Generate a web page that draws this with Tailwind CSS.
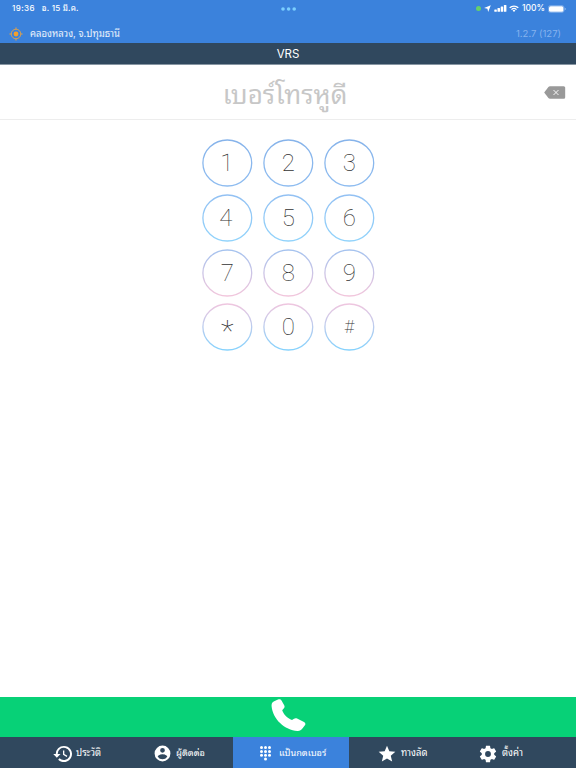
<!DOCTYPE html>
<html lang="th">
<head>
  <meta charset="UTF-8" />
  <meta name="viewport" content="width=device-width, initial-scale=1.0"/>
  <title>VRS</title>
  <script src="https://cdn.jsdelivr.net/npm/@tailwindcss/browser@4"></script>
</head>
<body class="h-screen flex flex-col overflow-hidden bg-white font-[Inter,'Noto_Sans_Thai_Looped',Loma,Garuda,Waree,sans-serif]">

  <!-- Status bar + location -->
  <header class="h-[43px] shrink-0 bg-[#3b82dc] text-white">
    <div class="h-[17px] flex items-center justify-between pl-3 pr-[10px] text-[8px] font-medium leading-none whitespace-nowrap">
      <div class="w-[200px] flex gap-[7px] -mt-[1px]">
        <span class="tracking-[0.4px]">19:36</span>
        <span class="tracking-[0.2px]">อ. 15 มี.ค.</span>
      </div>
      <svg class="w-[16px] h-[4px] fill-[#7bcfff]" viewBox="0 0 16 4"><circle cx="2" cy="2" r="1.8"/><circle cx="7.6" cy="2" r="1.8"/><circle cx="13.2" cy="2" r="1.8"/></svg>
      <div class="w-[200px] flex items-center justify-end">
        <span class="w-[5px] h-[5px] rounded-full bg-[#66d06a] mr-[3px]"></span>
        <svg class="w-[7px] h-[7px] mr-[3px] fill-white" viewBox="0 0 7 7"><path d="M6.8.2 4.2 6.9 3.4 3.7.1 3z"/></svg>
        <svg class="w-[13px] h-[7px] mr-[2px] fill-white" viewBox="0 0 13 7"><rect x=".3" y="4.4" width="2.5" height="2.4" rx=".5"/><rect x="3.5" y="3.1" width="2.5" height="3.7" rx=".5"/><rect x="6.7" y="1.6" width="2.5" height="5.2" rx=".5"/><rect x="9.9" y=".1" width="2.5" height="6.7" rx=".5"/></svg>
        <svg class="w-[10px] h-[7px] mr-[3px] fill-none stroke-white" viewBox="0 0 10 7" stroke-width="1.3"><path d="M.7 2.8a6.2 6.2 0 0 1 8.6 0M2.5 4.6a3.6 3.6 0 0 1 5 0"/><path d="M5 7 3.6 5.5a2 2 0 0 1 2.8 0z" fill="#fff" stroke="none"/></svg>
        <span class="text-[8.5px] mr-[3px]">100%</span>
        <svg class="w-[18px] h-[8px]" viewBox="0 0 18 8"><rect x=".4" y=".6" width="15.6" height="6.8" rx="2" fill="none" stroke="#8fb9ee" stroke-width=".7"/><rect x="1" y="1.2" width="14.4" height="5.6" rx="1.5" fill="#fff"/><path d="M16.8 2.8v2.4q.9-.4.9-1.2t-.9-1.2z" fill="#a9c9f2"/></svg>
      </div>
    </div>
    <div class="h-[26px] pt-[7px] pl-[9px] pr-[15px] flex items-start justify-between leading-[19px]">
      <div class="flex">
        <svg class="w-[14px] h-[14px] mt-[3px] mr-[7px]" viewBox="0 0 14 14"><circle cx="7" cy="7" r="4.8" fill="none" stroke="#d9a050" stroke-width="1"/><circle cx="7" cy="7" r="2.4" fill="#f3a02c"/><path d="M7 .4v2.2M7 11.4v2.2M.4 7h2.2M11.4 7h2.2" stroke="#d9a050"/></svg>
        <span class="text-[9.5px] text-white/90">คลองหลวง, จ.ปทุมธานี</span>
      </div>
      <span class="text-[9.5px] text-[#86b3ee]">1.2.7 (127)</span>
    </div>
  </header>

  <div class="h-[22px] shrink-0 bg-[#30485e] border-b border-[#8796a3] text-white text-[11.5px] leading-[22px] text-center">VRS</div>

  <!-- Number display -->
  <div class="h-[55px] shrink-0 flex border-b border-[#ededed] pr-[10px]">
    <div class="w-[544px] pl-[26px] pt-[10px] text-center text-[26px] leading-[40px] text-[#c7c7c7] whitespace-nowrap">เบอร์โทรหูดี</div>
    <svg class="w-[22px] h-[13px] mt-[21px] shrink-0" viewBox="0 0 22 13"><path d="M.2 6.5 4.4 1Q5 .3 6 .3h13.7q1.5 0 1.5 1.5v9.4q0 1.5-1.5 1.5H6q-1 0-1.6-.7z" fill="#999"/><path d="m9.5 4 5 5m0-5-5 5" stroke="#fff" stroke-width=".9"/></svg>
  </div>

  <svg class="absolute w-0 h-0">
    <defs>
      <linearGradient id="row1" x2="0" y2="1"><stop stop-color="#86b3ea"/><stop offset="1" stop-color="#8ebcf0"/></linearGradient>
      <linearGradient id="row2" x2="0" y2="1"><stop stop-color="#93c1f3"/><stop offset="1" stop-color="#91d3fb"/></linearGradient>
      <linearGradient id="row3" x2="0" y2="1"><stop stop-color="#a5c3ef"/><stop offset="1" stop-color="#f2c6dc"/></linearGradient>
      <linearGradient id="row4" x2="0" y2="1"><stop stop-color="#efc6df"/><stop offset="1" stop-color="#85d2fd"/></linearGradient>
    </defs>
  </svg>

  <!-- Keypad -->
  <main class="flex-1 pt-[19px]">
    <div id="keypad" class="w-[172px] mx-auto grid grid-cols-3 gap-x-[10.7px] gap-y-[7.3px]"></div>
  </main>

  <button class="h-[40px] shrink-0 bg-[#07d177] flex justify-center">
    <svg class="w-[35px] h-[33px] mt-[2px] fill-white" viewBox="0 0 35 33"><path d="M2.7 2.6 7 .5C8.5-.2 9.8.3 10.5 1.5L13.2 6.2C13.9 7.6 13.6 8.8 12.5 9.7L11.2 11.3C12.6 15.6 16.2 19.3 21 21L23 19.7C24 19 25 19 26.1 19.5L33 22.9C34.4 23.6 34.8 25 33.9 26.3L31.4 29.6C30.2 31.2 28.8 32.1 26.5 32C13.5 30.9 1.8 20.2.6 7.2C.4 5.2 1 3.5 2.7 2.6Z"/></svg>
  </button>

  <!-- Tabs -->
  <nav class="h-[31px] shrink-0 bg-[#30485e] flex pl-[26px] text-white text-[9.5px] leading-[20px] whitespace-nowrap">
    <a class="w-[102px] pl-[27px] flex items-center">
      <svg class="w-[20px] h-[20px] mt-[2px] mr-[3px] fill-white" viewBox="0 0 24 24"><path d="M13 2.3A9.7 9.7 0 0 0 3.3 12H.3l4.3 4.5L9 12H5.6A7.4 7.4 0 1 1 7.8 17.2l-1.6 1.6A9.7 9.7 0 1 0 13 2.3zm-1 5.4v5.2l4.4 2.6.8-1.3-3.6-2.1V7.7z"/></svg>
      <span>ประวัติ</span>
    </a>
    <a class="w-[105px] pl-[25px] flex items-center">
      <svg class="w-[19px] h-[19px] mt-[2px] mr-[4px] fill-white" viewBox="0 0 24 24"><path d="M12 2a10 10 0 1 0 0 20 10 10 0 0 0 0-20zm0 3a3 3 0 1 1 0 6 3 3 0 0 1 0-6zm0 14.2a7.2 7.2 0 0 1-6-3.22c.03-1.99 4-3.08 6-3.08s5.97 1.09 6 3.08a7.2 7.2 0 0 1-6 3.22z"/></svg>
      <span class="text-[9.2px]">ผู้ติดต่อ</span>
    </a>
    <a class="w-[116px] pl-[27px] flex items-center bg-[#3b82dc]">
      <svg class="w-[11px] h-[15px] mt-[2px] mr-[8px] fill-white" viewBox="0 0 11 15"><circle cx="1.5" cy="1.6" r="1.5"/><circle cx="5.5" cy="1.6" r="1.5"/><circle cx="9.5" cy="1.6" r="1.5"/><circle cx="1.5" cy="5.4" r="1.5"/><circle cx="5.5" cy="5.4" r="1.5"/><circle cx="9.5" cy="5.4" r="1.5"/><circle cx="1.5" cy="9.2" r="1.5"/><circle cx="5.5" cy="9.2" r="1.5"/><circle cx="9.5" cy="9.2" r="1.5"/><circle cx="5.5" cy="13" r="1.5"/></svg>
      <span class="text-[9.2px]">แป้นกดเบอร์</span>
    </a>
    <a class="w-[108px] pl-[28px] flex items-center">
      <svg class="w-[20px] h-[20px] mt-[2px] mr-[4px] fill-white" viewBox="0 0 24 24"><path d="m12 17.27 6.18 3.73-1.64-7.03L22 9.24l-7.19-.61L12 2 9.19 8.63 2 9.24l5.46 4.73L5.82 21z"/></svg>
      <span>ทางลัด</span>
    </a>
    <a class="pl-[21px] flex items-center">
      <svg class="w-[20px] h-[20px] mt-[2px] mr-[4px] fill-white" viewBox="0 0 24 24"><path d="M19.43 12.98c.04-.32.07-.64.07-.98s-.03-.66-.07-.98l2.11-1.65c.19-.15.24-.42.12-.64l-2-3.46c-.12-.22-.39-.3-.61-.22l-2.49 1c-.52-.4-1.08-.73-1.69-.98l-.38-2.65A.49.49 0 0 0 14 2h-4c-.25 0-.46.18-.49.42l-.38 2.65c-.61.25-1.17.59-1.69.98l-2.49-1c-.23-.09-.49 0-.61.22l-2 3.46c-.13.22-.07.49.12.64l2.11 1.65c-.04.32-.07.65-.07.98s.03.66.07.98l-2.11 1.65c-.19.15-.24.42-.12.64l2 3.46c.12.22.39.3.61.22l2.49-1c.52.4 1.08.73 1.69.98l.38 2.65c.03.24.24.42.49.42h4c.25 0 .46-.18.49-.42l.38-2.65c.61-.25 1.17-.59 1.69-.98l2.49 1c.23.09.49 0 .61-.22l2-3.46c.12-.22.07-.49-.12-.64zM12 15.5a3.5 3.5 0 1 1 0-7 3.5 3.5 0 0 1 0 7z"/></svg>
      <span>ตั้งค่า</span>
    </a>
  </nav>

  <script>
    const keys = ['1', '2', '3', '4', '5', '6', '7', '8', '9', '*', '0', '#'];
    const dx = { '1': -0.5, '4': -1.5 };

    document.getElementById('keypad').innerHTML = keys.map((key, i) => {
      const row = Math.floor(i / 3) + 1;
      const size = key === '#' ? 18 : key === '*' ? 30 : 24;
      const y = key === '#' ? 30 : key === '*' ? 38 : 32;
      return `<button class="h-[47.5px]">
        <svg class="w-full h-full overflow-visible font-[Roboto,sans-serif] font-thin" viewBox="0 0 50.2 47.5">
          <ellipse cx="25.3" cy="24" rx="24.4" ry="23" fill="none" stroke="url(#row${row})" stroke-width="1.3"/>
          <text x="${25.3 + (dx[key] || 0)}" y="${y}" text-anchor="middle" font-size="${size}" fill="#333">${key}</text>
        </svg>
      </button>`;
    }).join('');
  </script>

</body>
</html>
